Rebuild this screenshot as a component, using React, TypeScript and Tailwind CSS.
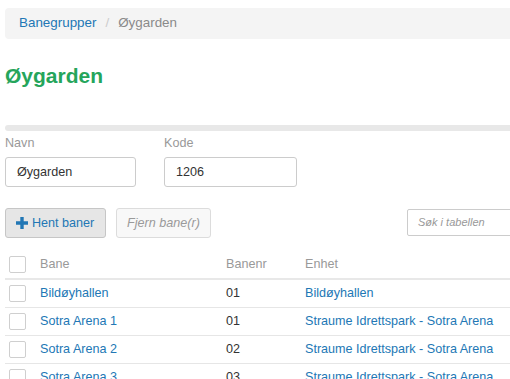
import React from "react";

const rows = [
  { bane: "Bildøyhallen", nr: "01", enhet: "Bildøyhallen" },
  { bane: "Sotra Arena 1", nr: "01", enhet: "Straume Idrettspark - Sotra Arena" },
  { bane: "Sotra Arena 2", nr: "02", enhet: "Straume Idrettspark - Sotra Arena" },
  { bane: "Sotra Arena 3", nr: "03", enhet: "Straume Idrettspark - Sotra Arena" },
];

function Box() {
  return <span className="block h-[17px] w-[17px] rounded-[2px] border border-[#cfcfcf] bg-white" />;
}

function PlusIcon() {
  return (
    <svg width="12" height="12" viewBox="0 0 12 12" className="shrink-0">
      <path d="M4.3 0h3.4v4.3H12v3.4H7.7V12H4.3V7.7H0V4.3h4.3z" fill="#2277b5" />
    </svg>
  );
}

export default function App() {
  return (
    <div
      className="h-[379px] w-[510px] overflow-hidden bg-white text-[12.6px] text-[#333]"
      style={{ fontFamily: '"Liberation Sans", Arial, sans-serif' }}
    >
      <div className="w-[620px] pl-[5px] pt-[8px]">
        <nav className="flex h-[31px] items-center rounded-l-[4px] bg-[#f4f4f4] pl-[14px] text-[13.4px]">
          <a className="text-[#2277b5]">Banegrupper</a>
          <span className="px-[9px] text-[#cccccc]">/</span>
          <span className="text-[#8a8a8a]">Øygarden</span>
        </nav>

        <h1 className="mt-[22px] h-[30px] text-[21px] font-bold leading-[30px] text-[#25a55b]">Øygarden</h1>

        <div className="mt-[34px] h-[6px] rounded-l-[3px] bg-[#e8e8e8]" />

        <div className="mt-[4px] flex gap-[28px]">
          <label className="flex flex-col">
            <span className="h-[16px] leading-[16px] text-[#999]">Navn</span>
            <div className="mt-[6px] flex h-[30px] w-[131px] items-center rounded-[3px] border border-[#cccccc] px-[11px]">
              Øygarden
            </div>
          </label>
          <label className="flex flex-col">
            <span className="h-[16px] leading-[16px] text-[#999]">Kode</span>
            <div className="mt-[6px] flex h-[30px] w-[133px] items-center rounded-[3px] border border-[#cccccc] px-[11px]">
              1206
            </div>
          </label>
        </div>

        <div className="mt-[21px] flex items-start">
          <button className="flex h-[30px] w-[101px] items-center gap-[4px] rounded-[3px] border border-[#c6c6c6] bg-[#e6e6e6] pl-[10px] text-[#2277b5]">
            <PlusIcon />
            <span>Hent baner</span>
          </button>
          <button className="ml-[10px] flex h-[30px] w-[95px] items-center justify-center rounded-[3px] border border-[#dcdcdc] bg-[#f8f8f8] italic text-[#9a9a9a]">
            Fjern bane(r)
          </button>
          <div className="ml-auto mt-[1px] flex h-[27px] w-[213px] items-center rounded-[2px] border border-[#cccccc] pl-[10px] text-[11px] italic text-[#999]">
            Søk i tabellen
          </div>
        </div>

        <div className="mt-[12px]">
          <div className="grid h-[30px] grid-cols-[35px_186px_79px_1fr] items-center border-b-2 border-[#e8e8e8] text-[#999]">
            <span className="pl-[4px]">
              <Box />
            </span>
            <span>Bane</span>
            <span>Banenr</span>
            <span>Enhet</span>
          </div>
          {rows.map((r) => (
            <div
              key={r.bane}
              className="grid h-[28px] grid-cols-[35px_186px_79px_1fr] items-center border-b border-[#e6e6e6]"
            >
              <span className="pl-[4px]">
                <Box />
              </span>
              <a className="text-[#2277b5]">{r.bane}</a>
              <span>{r.nr}</span>
              <a className="text-[#2277b5]">{r.enhet}</a>
            </div>
          ))}
        </div>
      </div>
    </div>
  );
}
